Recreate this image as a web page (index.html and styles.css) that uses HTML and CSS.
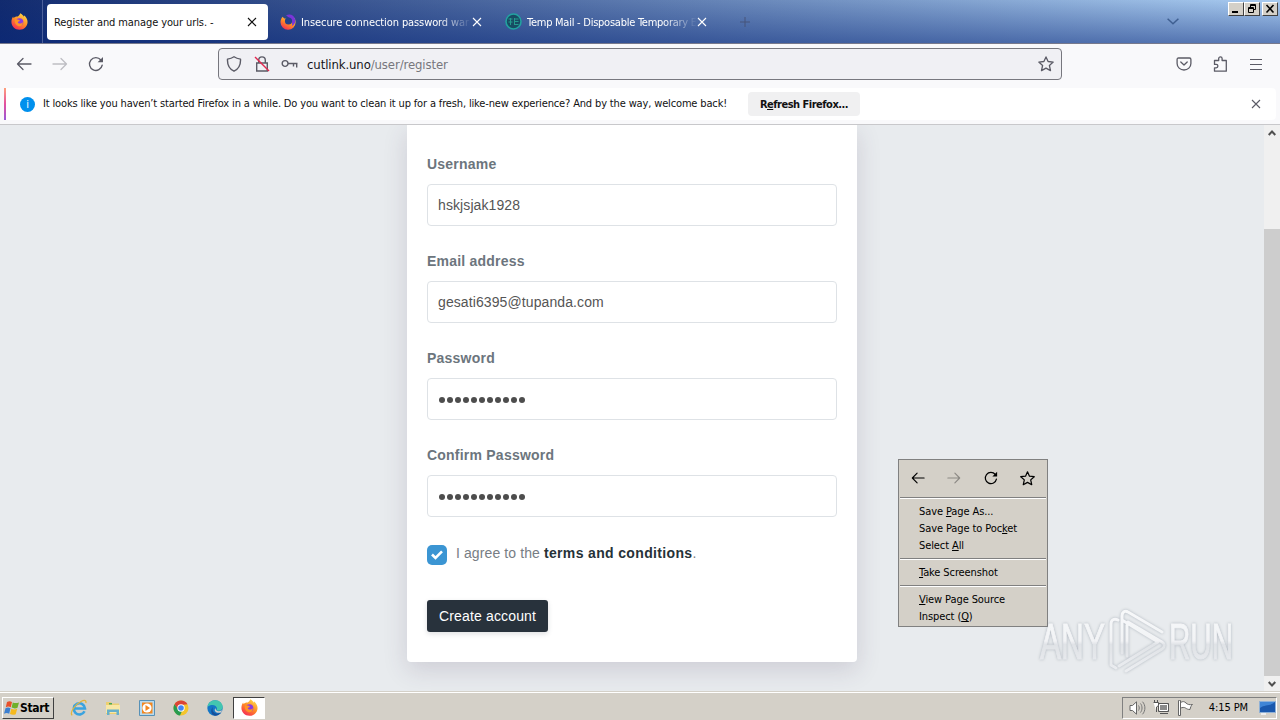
FILE: index.html
```html
<!DOCTYPE html>
<html lang="en">
<head>
    <meta charset="utf-8">
    <title>Register and manage your urls. -</title>
    <link rel="stylesheet" href="styles.css">
</head>
<body>
    <svg class="defs" width="0" height="0">
        <defs>
            <linearGradient id="fire" x1="0.8" y1="0" x2="0.2" y2="1">
                <stop offset="0" stop-color="#ffe14a"/>
                <stop offset="0.5" stop-color="#ff8a26"/>
                <stop offset="1" stop-color="#f5245a"/>
            </linearGradient>
            <symbol id="firefox" viewBox="0 0 16 16">
                <path fill="url(#fire)" d="M8 15.8c-4.300 0-7.600-3.300-7.600-7.300C.4 6.300 1 4.600 2 3.200c.1.700.3 1.200.6 1.600.8-.9 1.800-1.400 2.900-1.400C6.500 3.300 8 2.300 8.700.2c2.400 1 3 2.600 3.100 3.400.3-.3.4-.9.3-1.400 2.100 1.500 3.500 3.800 3.500 6.300 0 4-3.300 7.300-7.600 7.300z"/>
                <circle cx="8" cy="8.500" r="3.600" fill="#8b3be0"/>
                <path fill="#ff9426" d="M3.600 6.200c1.500-.8 2.500-.3 3.600.1l1.300.9c-.6.800-2 .6-2.100 1.500.4 1.700 3.400 1.700 4.700-.2.300 3-1.900 4.300-4 3.900-2.500-.5-4-3.200-3.500-6.200z"/>
            </symbol>
            <!-- support.mozilla.org favicon -->
            <symbol id="sumo" viewBox="0 0 16 16">
                <path fill="url(#fire)" d="M8 15.800A7.500 7.500 0 0 1 .5 8.300C.5 6 1.300 4 2.700 2.700 3 3.500 4 4 4.500 4.500L12 5l2.500-1c.7 1.200 1.100 2.700 1.100 4.300A7.500 7.500 0 0 1 8 15.800z"/>
                <path fill="#7a35d8" d="M6 1.500c4-2.200 8-.2 9.200 4C15.800 9 14 11 12 12c1-4-2-8-6-10.500z"/>
                <circle cx="8.500" cy="7" r="3.600" fill="#24418a"/>
            </symbol>
            <symbol id="back" viewBox="0 0 16 16">
                <path fill="none" stroke="currentColor" stroke-width="1.300" stroke-linecap="round" stroke-linejoin="round" d="M15 8H1.500M7 2.500 1.500 8 7 13.500"/>
            </symbol>
            <symbol id="reload" viewBox="0 0 16 16">
                <path fill="none" stroke="currentColor" stroke-width="1.400" stroke-linecap="round" d="M14.200 9.200A6.400 6.400 0 1 1 12.900 4"/>
                <path fill="currentColor" d="M15 .9v5.400H9.600z"/>
            </symbol>
            <symbol id="star" viewBox="0 0 16 16">
                <path fill="none" stroke="currentColor" stroke-width="1.300" stroke-linejoin="round" d="m8 .9 2.100 4.600 5.100.6-3.800 3.400 1.100 5.100L8 12.100l-4.500 2.500 1.100-5.100L.8 6.100l5.100-.6z"/>
            </symbol>
            <symbol id="cross" viewBox="0 0 10 10">
                <path fill="none" stroke="currentColor" stroke-width="1.100" d="m1 1 8 8M9 1 1 9"/>
            </symbol>
        </defs>
    </svg>

    <div class="tabstrip">
        <div class="view"><svg width="17" height="17"><use href="#firefox"/></svg></div>
        <div class="tab active">
            <span class="tab-title">Register and manage your urls. -</span>
            <svg class="close" width="10" height="10"><use href="#cross"/></svg>
        </div>
        <div class="tab">
            <svg class="favicon" width="16" height="16"><use href="#sumo"/></svg>
            <span class="tab-title fade">Insecure connection password war</span>
            <svg class="close" width="10" height="10"><use href="#cross"/></svg>
        </div>
        <div class="tab">
            <svg class="favicon" width="17" height="17" viewBox="0 0 17 17">
                <circle cx="8.500" cy="8.500" r="7.500" fill="#174c63" stroke="#22a2a0" stroke-width="1.600"/>
                <path fill="none" stroke="#249a8f" d="M3.500 6h4M3.500 9h4M5.500 5v7M9.500 5v7M9.500 6h4M9.500 8.500h4M9.500 11.500h4"/>
            </svg>
            <span class="tab-title fade mail">Temp Mail - Disposable Temporary E</span>
            <svg class="close" width="10" height="10"><use href="#cross"/></svg>
        </div>
        <svg class="newtab" width="10" height="10" viewBox="0 0 10 10"><path stroke="#47557a" d="M5 0v10M0 5h10"/></svg>
        <svg class="alltabs" width="12" height="7" viewBox="0 0 12 7"><path fill="none" stroke="#3f5f91" stroke-width="1.500" d="m.6.7 5.400 5 5.400-5"/></svg>
        <div class="winbuttons">
            <div class="winbtn"><svg width="12" height="10" viewBox="0 0 12 10"><path d="M2 7h6v2H2z"/></svg></div>
            <div class="winbtn"><svg width="12" height="10" viewBox="0 0 12 10"><path fill="none" stroke="#000" d="M4.500 3V.5h5v5H8M4 1.500h6M2.500 3.500h5v5h-5zM2 4.500h6"/></svg></div>
            <div class="winbtn last"><svg width="12" height="10" viewBox="0 0 12 10"><path stroke="#000" stroke-width="1.600" d="m2.500 1 7 7.500M9.500 1l-7 7.500"/></svg></div>
        </div>
    </div>

    <div class="navbar">
        <svg class="nav-back" width="16" height="16"><use href="#back"/></svg>
        <svg class="nav-forward flip" width="16" height="16"><use href="#back"/></svg>
        <svg class="nav-reload" width="16" height="16"><use href="#reload"/></svg>
        <div class="urlbar">
            <svg class="shield" width="16" height="16" viewBox="0 0 16 16"><path fill="none" stroke="currentColor" stroke-width="1.400" stroke-linejoin="round" d="M8 .8c2 1.400 4 2 6.500 2.300.3 5.300-1 9.400-6.500 12.100C2.500 12.500 1.200 8.400 1.500 3.100 4 2.800 6 2.200 8 .8z"/></svg>
            <svg class="lock" width="16" height="16" viewBox="0 0 16 16">
                <path fill="none" stroke="currentColor" stroke-width="1.400" d="M4.700 7V4.200a3.300 3.300 0 0 1 6.600 0V7M2.700 7h10.600v8H2.700z"/>
                <path stroke="#e22850" stroke-width="1.400" d="m1 1 14 14"/>
            </svg>
            <svg class="key" width="17" height="10" viewBox="0 0 17 10"><path fill="none" stroke="currentColor" stroke-width="1.400" d="M7 4.500a2.900 2.900 0 1 1-5.800 0 2.900 2.900 0 0 1 5.800 0zm0 0h9.500M12.500 5v2.500M15.700 5v3.500"/></svg>
            <span class="url"><b>cutlink.uno</b>/user/register</span>
            <svg class="bookmark" width="16" height="16"><use href="#star"/></svg>
        </div>
        <svg class="pocket" width="16" height="14" viewBox="0 0 16 14"><path fill="none" stroke="currentColor" stroke-width="1.300" stroke-linecap="round" stroke-linejoin="round" d="M2.500 1h11c.9 0 1.400.6 1.400 1.500v4c0 3.700-3.100 6.500-6.900 6.500S1.100 10.200 1.100 6.500v-4C1.100 1.600 1.600 1 2.500 1zM4.800 5 8 8l3.200-3"/></svg>
        <svg class="puzzle" width="15" height="16" viewBox="0 0 15 16"><path fill="none" stroke="currentColor" stroke-width="1.300" stroke-linejoin="round" d="M1.500 4.500h4.200V2.600a1.700 1.700 0 0 1 3.400 0v1.900h4.200v10.700H1.500v-3.400h1.700a1.700 1.700 0 0 0 0-3.400H1.500z"/></svg>
        <svg class="burger" width="12" height="11" viewBox="0 0 12 11"><path stroke="currentColor" stroke-width="1.200" d="M0 .5h12M0 5.500h12M0 10.500h12"/></svg>
    </div>

    <div class="notice-row">
        <div class="notice">
            <div class="info">i</div>
            <span class="notice-text">It looks like you haven’t started Firefox in a while. Do you want to clean it up for a fresh, like-new experience? And by the way, welcome back!</span>
            <button class="refresh"><span>R<u>e</u>fresh Firefox...</span></button>
            <svg class="notice-close" width="10" height="10"><use href="#cross"/></svg>
        </div>
    </div>

    <div class="viewport">
        <div class="page">
            <form class="card">
                <label>Username</label>
                <div class="field">hskjsjak1928</div>
                <label>Email address</label>
                <div class="field">gesati6395@tupanda.com</div>
                <label>Password</label>
                <div class="field dots"><i></i><i></i><i></i><i></i><i></i><i></i><i></i><i></i><i></i><i></i><i></i></div>
                <label>Confirm Password</label>
                <div class="field dots"><i></i><i></i><i></i><i></i><i></i><i></i><i></i><i></i><i></i><i></i><i></i></div>
                <div class="agree">
                    <div class="check"><svg width="12" height="10" viewBox="0 0 12 10"><path fill="none" stroke="#fff" stroke-width="2.600" d="m1 4.500 3.500 3.500L11 1.300"/></svg></div>
                    <span class="agree-text">I agree to the <strong>terms and conditions</strong>.</span>
                </div>
                <button type="button" class="create">Create account</button>
            </form>
        </div>
        <div class="scrollbar">
            <svg width="8" height="6" viewBox="0 0 8 6"><path fill="none" stroke="#505050" stroke-width="2" d="m.7 5 3.300-3.500L7.300 5"/></svg>
            <div class="thumb"></div>
            <svg width="8" height="6" viewBox="0 0 8 6"><path fill="none" stroke="#505050" stroke-width="2" d="m.7 1 3.300 3.500L7.300 1"/></svg>
        </div>
    </div>

    <div class="taskbar">
        <div class="start">
            <svg width="16" height="16" viewBox="0 0 16 16">
                <path fill="#e8502a" d="M3 2c2-1.300 3.500-1 5 0L6.800 7.300C5 6.300 3.500 6.300 1.800 7.300z"/>
                <path fill="#6fb02c" d="M8.800 2.400c1.800 1 3.900.9 6.200 0L13.500 7.800c-1.800.9-4 .8-5.900-.2z"/>
                <path fill="#3c7fd0" d="M1.500 8.300c1.800-1 3.300-.9 5 0L5.200 13.700c-1.700-1-3.400-1-5.200 0z"/>
                <path fill="#f5b91e" d="M7.300 8.700c1.800 1 3.700 1 5.900.1L11.700 14.200c-1.800.9-3.800.8-5.700-.2z"/>
            </svg>
            <span>Start</span>
        </div>
        <div class="launch">
            <svg width="18" height="18" viewBox="0 0 18 18">
                <path fill="none" stroke="#3aa3df" stroke-width="2.600" d="M14.500 12.200A5.600 5.600 0 1 1 15 9.500H4"/>
                <path fill="none" stroke="#e3b43a" stroke-width="1.300" d="M2.300 16.300C-.5 14.500 4 6 11 2.500c4-2 5.500-.8 4.800 1.500"/>
            </svg>
            <svg width="18" height="18" viewBox="0 0 18 18">
                <path fill="#edcf70" d="M2 3h5l1 1.500h7V15H2z"/><path fill="#f8e7a6" d="M2 6h14v8H2z"/>
                <path fill="#67afc9" d="M3 10.500h12V16h-2.500v-3h-7v3H3z"/><path fill="#4ca85b" d="M5 4h3v1.500H5z"/>
            </svg>
            <svg width="18" height="18" viewBox="0 0 18 18">
                <path fill="#b8daee" stroke="#5791b7" d="M1.500 1.500h15v15h-15z"/><path fill="#f28720" d="M4 3.500h10.500v11H4z"/><circle cx="9" cy="9" r="4.600" fill="#fff"/><path fill="#f28720" d="M7.500 6v6l4.500-3z"/>
            </svg>
            <svg width="18" height="18" viewBox="0 0 18 18">
                <circle cx="9" cy="9" r="7.500" fill="#f4c52d"/>
                <path fill="#db4437" d="M2.500 5.200A7.500 7.500 0 0 1 15.500 5.200L9 6 6 11z"/>
                <path fill="#279b50" d="M2.500 5.200 6.500 11 10 12l-2 4.500A7.500 7.500 0 0 1 2.500 5.200z"/>
                <circle cx="9" cy="9" r="3.700" fill="#fff"/><circle cx="9" cy="9" r="2.800" fill="#4285f4"/>
            </svg>
            <svg width="18" height="18" viewBox="0 0 18 18">
                <circle cx="9" cy="9" r="7.700" fill="#1476c6"/>
                <path fill="#43c6b0" d="M1.500 8C2 3.500 5.500 1.300 9 1.300c5 0 7.700 3.500 7.700 6.700 0 2.500-2 3.700-4.200 3.700-2 0-2.500-.8-1.500-2C11 6 5 4.500 1.500 8z"/>
                <path fill="#164f9a" d="M7 8c-1.500 3 .5 6.700 4.500 6.700 1.500 0 2.700-.4 3.700-1.100A7.700 7.700 0 0 1 9 16.700C5 16 4 11 7 8z"/>
                <path fill="#d4d0c8" d="M9.500 9c-.5 3 3.500 4 6.700 2.300l-1 2C11 15 7 12 9.500 9z"/>
            </svg>
        </div>
        <div class="running"><svg width="17" height="17"><use href="#firefox"/></svg></div>
        <div class="tray">
            <svg class="sound" width="17" height="14" viewBox="0 0 17 14">
                <path fill="#fff" stroke="#666" d="M1 4.500h2.500L7.500.8v12.400l-4-3.700H1z"/>
                <path fill="none" stroke="#777" d="M9.500 4.500c1 1.500 1 3.500 0 5M11.500 2.500c2 2.500 2 6.500 0 9M13.500.7c3.200 3.500 3.200 9 0 12.600"/>
            </svg>
            <svg class="net" width="17" height="15" viewBox="0 0 17 15">
                <path fill="#8a8a8a" stroke="#555" d="M5.500 3.500h10v8h-10z"/><path fill="none" stroke="#fff" d="M6.500 4.500h8v6h-8z"/>
                <path fill="#fff" stroke="#555" d="M.5 2.500h5v3l-2 1.500v5M1.500 0v2.500M4.500 0v2.500M7 13.500h8"/>
            </svg>
            <svg class="flag" width="17" height="16" viewBox="0 0 17 16">
                <path fill="#fff" stroke="#666" d="M3.500 2.500C6 1 7.500 1.500 9 3s3.500 2 6.500 1.500c-1.500 1-2 3-2.500 5-2 0-3-.5-4.500-1.500s-3-.5-5 0M2.500.5h-1v15h2V.5z"/>
            </svg>
            <span class="clock">4:15 PM</span>
            <svg class="desktop" width="17" height="14" viewBox="0 0 17 14">
                <path fill="#1a58ad" stroke="#8fb1d7" d="M.5.500h16v11H.5z"/><path fill="#3f85d6" d="M1 7c5-4 9-1 15-6H1z"/><path fill="#eee" d="M2 12h5v2H2z"/>
            </svg>
        </div>
    </div>

    <div class="menu">
        <div class="menu-icons">
            <svg width="14" height="14"><use href="#back"/></svg>
            <svg class="flip dim" width="14" height="14"><use href="#back"/></svg>
            <svg width="14" height="14"><use href="#reload"/></svg>
            <svg width="15" height="15"><use href="#star"/></svg>
        </div>
        <hr>
        <div class="item">Save <u>P</u>age As...</div>
        <div class="item">Save Page to Poc<u>k</u>et</div>
        <div class="item">Select <u>A</u>ll</div>
        <hr>
        <div class="item"><u>T</u>ake Screenshot</div>
        <hr>
        <div class="item"><u>V</u>iew Page Source</div>
        <div class="item">Inspect (<u>Q</u>)</div>
    </div>

    <svg class="watermark" width="200" height="70" viewBox="0 0 200 70">
        <defs>
            <linearGradient id="glass" x1="0" y1="0" x2="0" y2="70" gradientUnits="userSpaceOnUse">
                <stop offset="0.1" stop-color="#fafbfc"/>
                <stop offset="0.5" stop-color="#f4f5f7"/>
                <stop offset="0.55" stop-color="#dfe2e6"/>
                <stop offset="0.9" stop-color="#eceef1"/>
            </linearGradient>
        </defs>
        <text x="4" y="53" textLength="65" lengthAdjust="spacingAndGlyphs">ANY</text>
        <path d="M82 14c-4-2-7 0-7 4v41l5 3M86 47V10c0-4 3-6 6-4l34 20M86 14l36 22-39 24M91 19v31M90 65l36-22c3-2 3-5 0-7L92 16"/>
        <text x="133" y="53" textLength="64" lengthAdjust="spacingAndGlyphs">RUN</text>
    </svg>
</body>
</html>
```
FILE: styles.css
```css
* {
    box-sizing: border-box;
}

body {
    margin: 0;
    width: 1280px;
    height: 720px;
    overflow: hidden;
    position: relative;
    display: flex;
    flex-direction: column;
    font-family: "DejaVu Sans Condensed", "DejaVu Sans", sans-serif;
    font-stretch: condensed;
    font-size: 11px;
    letter-spacing: -0.1px;
    color: #111;
    background: #e8ebee;
}

svg {
    flex: none;
}

.defs {
    position: absolute;
}

.flip {
    transform: scaleX(-1);
}

/* tabs */
.tabstrip {
    height: 44px;
    flex: none;
    display: flex;
    align-items: center;
    background: linear-gradient(to bottom, rgba(255, 255, 255, 0.03), rgba(15, 45, 125, 0.5)), linear-gradient(to right, #0a246a, #a6caf0);
    border-bottom: 1px solid #77798c;
}

.view {
    width: 43px;
    height: 43px;
    padding-left: 11px;
    display: flex;
    align-items: center;
    border-right: 1px solid #4c609a;
}

.tab {
    height: 36px;
    width: 221px;
    margin-left: 4px;
    padding: 0 11px 0 8px;
    display: flex;
    align-items: center;
    color: #fff;
    border-radius: 4px;
}

.tab.active {
    padding-left: 7px;
    color: #111;
    background: #fff;
}

.tab-title {
    flex: 1;
    min-width: 0;
    padding-top: 2px;
    white-space: nowrap;
}

.favicon {
    margin-right: 5px;
}

.fade {
    mask-image: linear-gradient(to right, #000 80%, transparent);
}

.mail {
    letter-spacing: -0.25px;
}

.newtab {
    margin-left: 22px;
}

.alltabs {
    margin-left: 417px;
}

.winbuttons {
    display: flex;
    align-self: flex-start;
    margin: 2px 2px 0 auto;
}

.winbtn {
    width: 16px;
    height: 14px;
    padding: 1px;
    background: #d4d0c8;
    border: 1px solid;
    border-color: #fff #404040 #404040 #fff;
}

.winbtn.last {
    margin-left: 2px;
}

.winbtn svg {
    display: block;
}

/* toolbar */
.navbar {
    height: 44px;
    flex: none;
    display: flex;
    align-items: center;
    padding: 0 18px 4px 16px;
    color: #5b5b66;
    background: #f9f9fb;
}

.nav-forward {
    margin-left: 20px;
    color: #bebec3;
}

.nav-reload {
    margin-left: 20px;
}

.urlbar {
    width: 844px;
    height: 32px;
    margin-left: 114px;
    padding: 0 7px;
    display: flex;
    align-items: center;
    background: #f0f0f4;
    border: 1px solid #77777e;
    border-radius: 4px;
}

.lock {
    margin-left: 12px;
}

.key {
    margin-left: 11px;
}

.url {
    margin-left: 9px;
    font-size: 13px;
    color: #77777d;
}

.url b {
    font-weight: normal;
    color: #15141a;
}

.bookmark {
    margin-left: auto;
}

.pocket {
    margin-left: 114px;
}

.puzzle {
    margin-left: 21px;
}

.burger {
    margin-left: auto;
}

/* notification */
.notice-row {
    height: 37px;
    flex: none;
    padding: 0 4px;
    background: #f9f9fb;
    border-bottom: 1px solid #c8c8cb;
}

.notice {
    height: 32px;
    padding: 0 15px 0 16px;
    display: flex;
    align-items: center;
    background: linear-gradient(to bottom, #ffa07c, #e34f9e 50%, #9858d8) left / 2px 100% no-repeat #fff;
    border-radius: 0 4px 4px 0;
}

.info {
    width: 15px;
    height: 15px;
    border-radius: 50%;
    background: #0090ed;
    color: #fff;
    text-align: center;
    line-height: 15px;
}

.notice-text {
    margin-left: 8px;
    padding-bottom: 2px;
    letter-spacing: -0.148px;
    white-space: nowrap;
}

.refresh {
    width: 112px;
    height: 24px;
    margin-left: auto;
    padding: 0;
    border: 0;
    border-radius: 4px;
    background: #f0f0f1;
    font: bold 11px "DejaVu Sans Condensed", sans-serif;
    font-stretch: condensed;
    letter-spacing: -0.5px;
    color: #111;
}

.notice-close {
    margin-left: 391px;
    color: #5b5b66;
}

/* web page */
.viewport {
    flex: 1;
    min-height: 0;
    display: flex;
    border-bottom: 1px solid #d4d0c8;
}

.page {
    flex: 1;
    overflow: hidden;
    padding-left: 407px;
    background: #e8ebee;
}

.card {
    width: 450px;
    height: 537px;
    padding: 28px 20px 0;
    background: #fff;
    border-radius: 0 0 4px 4px;
    box-shadow: 0 8px 24px rgba(70, 50, 90, 0.16);
    font-family: "Liberation Sans", Arial, sans-serif;
    font-size: 14px;
    letter-spacing: 0.1px;
}

.card label {
    display: block;
    height: 31px;
    line-height: 22px;
    font-weight: bold;
    letter-spacing: 0.22px;
    color: #6c757d;
}

.field {
    height: 42px;
    margin-bottom: 24px;
    padding: 0 10px;
    display: flex;
    align-items: center;
    border: 1px solid #dee2e6;
    border-radius: 4px;
    color: #555;
}

.dots {
    gap: 2px;
    padding-left: 11px;
}

.dots i {
    width: 6px;
    height: 6px;
    margin-top: 2px;
    border-radius: 50%;
    background: #4d4d4d;
}

.agree {
    height: 24px;
    margin-top: 25px;
    display: flex;
    color: #777d84;
}

.check {
    width: 20px;
    height: 20px;
    margin: 3px 9px 0 0;
    display: flex;
    align-items: center;
    justify-content: center;
    border-radius: 5px;
    background: #3b95d3;
}

.agree-text {
    line-height: 22px;
    white-space: pre;
}

.agree-text strong {
    letter-spacing: 0.35px;
    color: #263238;
}

.create {
    width: 121px;
    height: 32px;
    margin-top: 34px;
    padding: 0;
    border: 0;
    border-radius: 3px;
    background: #28323c;
    box-shadow: 0 2px 5px rgba(40, 50, 60, 0.15);
    font: 14px "Liberation Sans", Arial, sans-serif;
    letter-spacing: 0.16px;
    color: #fff;
}

.scrollbar {
    width: 16px;
    padding: 5px 0 4px;
    display: flex;
    flex-direction: column;
    align-items: center;
    background: #f0f0f0;
}

.thumb {
    width: 16px;
    height: 447px;
    margin: auto 0 5px;
    background: #cdcdcd;
}

/* taskbar */
.taskbar {
    height: 28px;
    flex: none;
    display: flex;
    align-items: center;
    padding: 2px 3px 0 2px;
    background: #d4d0c8;
    border-top: 1px solid #fff;
}

.start {
    width: 52px;
    height: 22px;
    padding-left: 1px;
    display: flex;
    align-items: center;
    border: 1px solid;
    border-color: #fff #404040 #404040 #fff;
    font-size: 12px;
    font-weight: bold;
    letter-spacing: -0.3px;
    color: #000;
}

.launch {
    display: flex;
    gap: 16px;
    margin-left: 16px;
}

.running {
    width: 32px;
    height: 22px;
    margin-left: 9px;
    display: flex;
    align-items: center;
    justify-content: center;
    background: #fff;
    border: 1px solid;
    border-color: #404040 #fff #fff #404040;
}

.tray {
    height: 22px;
    width: 155px;
    margin-left: auto;
    padding: 0 0 0 6px;
    display: flex;
    align-items: center;
    border: 1px solid;
    border-color: #808080 #fff #fff #808080;
}

.net,
.flag {
    margin-left: 7px;
}

.clock {
    margin-left: auto;
    color: #000;
}

.desktop {
    margin-left: 11px;
}

/* context menu */
.menu {
    position: absolute;
    left: 898px;
    top: 459px;
    width: 150px;
    height: 168px;
    padding: 1px;
    background: #d4d0c8;
    border: 1px solid #808080;
    color: #000;
}

.menu-icons {
    height: 34px;
    padding: 0 11px;
    display: flex;
    align-items: center;
    justify-content: space-between;
}

.dim {
    color: #8c8984;
}

.menu hr {
    height: 2px;
    margin: 2px 0 4px;
    border: 0;
    border-top: 1px solid #808080;
    border-bottom: 1px solid #fff;
}

.item {
    height: 17px;
    padding-left: 19px;
    line-height: 17px;
    white-space: nowrap;
}

.item + hr {
    margin-top: 4px;
}

.watermark {
    position: absolute;
    left: 1036px;
    top: 606px;
    font-family: "Liberation Sans", Arial, sans-serif;
    font-size: 50px;
    letter-spacing: 0;
    filter: drop-shadow(0 0 1.5px rgba(100, 110, 125, 0.5));
    opacity: 0.85;
}

.watermark text {
    fill: url(#glass);
    stroke: url(#glass);
    stroke-width: 1;
}

.watermark path {
    fill: none;
    stroke: url(#glass);
    stroke-width: 3;
    stroke-linecap: round;
    stroke-linejoin: round;
}
```
